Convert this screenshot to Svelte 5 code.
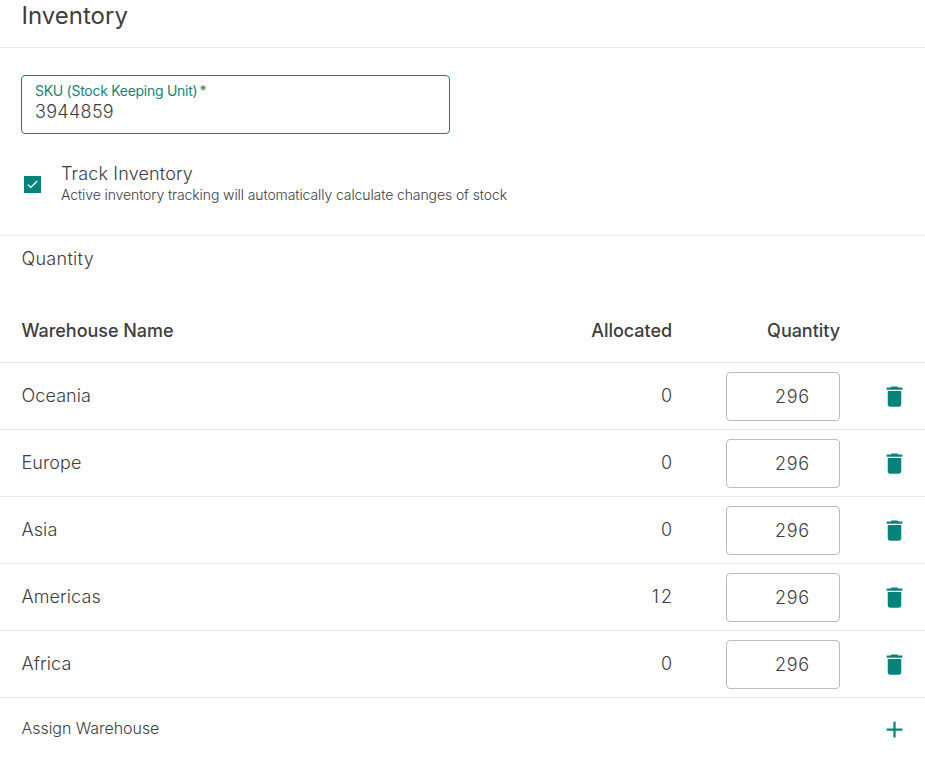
<script>
  let sku = $state('3944859');
  let tracked = $state(true);
  let stocks = $state([
    { name: 'Oceania', allocated: 0, quantity: '296' },
    { name: 'Europe', allocated: 0, quantity: '296' },
    { name: 'Asia', allocated: 0, quantity: '296' },
    { name: 'Americas', allocated: 12, quantity: '296' },
    { name: 'Africa', allocated: 0, quantity: '296' }
  ]);
  function remove(i) {
    stocks.splice(i, 1);
  }
</script>

<main class="card">
  <header><h1>Inventory</h1></header>

  <section class="details">
    <label class="field">
      <span class="caption">SKU (Stock Keeping Unit)&thinsp;*</span>
      <input class="sku" bind:value={sku} />
    </label>
    <div class="track">
      <button class="check" class:off={!tracked} aria-label="Track Inventory" onclick={() => (tracked = !tracked)}>
        {#if tracked}
          <svg width="11" height="9" viewBox="0 0 11 9"><path d="M.8 4.6 3.8 7.5 10.2 1" fill="none" stroke="#fff" stroke-width="1.2" /></svg>
        {/if}
      </button>
      <div>
        <div class="track-title">Track Inventory</div>
        <div class="track-note">Active inventory tracking will automatically calculate changes of stock</div>
      </div>
    </div>
  </section>

  <h2>Quantity</h2>

  <div class="row head">
    <span class="name">Warehouse Name</span>
    <span class="allocated">Allocated</span>
    <span class="qty">Quantity</span>
    <span class="action"></span>
  </div>
  {#each stocks as stock, i}
    <div class="row">
      <span class="name">{stock.name}</span>
      <span class="allocated count">{stock.allocated}</span>
      <span class="qty"><input bind:value={stock.quantity} aria-label="Quantity" /></span>
      <button class="action" aria-label="Delete" onclick={() => remove(i)}>
        <svg width="27" height="27" viewBox="0 0 24 24"><path fill="currentColor" d="M6 19c0 1.100.9 2 2 2h8c1.100 0 2-.9 2-2V7H6v12zM19 4h-3.500l-1-1h-5l-1 1H5v2h14V4z" /></svg>
      </button>
    </div>
  {/each}
  <div class="row assign">
    <span class="name">Assign Warehouse</span>
    <button class="action" aria-label="Assign warehouse">
      <svg width="27" height="27" viewBox="0 0 24 24"><path fill="currentColor" d="M19 13h-6v6h-2v-6H5v-2h6V5h2v6h6v2z" /></svg>
    </button>
  </div>
</main>

<style>
  :global(body) { background: #fff; overflow: hidden; }
  .card {
    width: 925px;
    height: 757px;
    overflow: hidden;
    background: #fff;
    color: #3d3d3d;
    font-family: Inter, "Liberation Sans", sans-serif;
    font-size: 18px;
  }
  header {
    height: 47px;
    padding-left: 21.5px;
    border-bottom: 1px solid #e6e6e6;
  }
  h1 { margin: 0; font-size: 24px; line-height: 31px; font-weight: 400; letter-spacing: 0; }
  .details {
    box-sizing: border-box;
    height: 188px;
    padding: 27px 21px 0;
    border-bottom: 1px solid #eaeaea;
  }
  .field {
    box-sizing: border-box;
    display: flex;
    flex-direction: column;
    width: 429px;
    height: 59px;
    padding: 6px 13px 0;
    border: 1px solid #148574;
    border-radius: 4px;
  }
  .caption { font-size: 14px; line-height: 18px; letter-spacing: -.28px; color: #148574; white-space: nowrap; }
  input { font: inherit; font-weight: 300; color: inherit; border: 0; outline: 0; background: none; padding: 0; }
  .sku { height: 24px; line-height: 24px; letter-spacing: .3px; }
  button { padding: 0; border: 0; background: none; color: #06847b; }
  .track { display: flex; align-items: flex-start; margin-top: 29px; }
  .check {
    display: flex;
    align-items: center;
    justify-content: center;
    width: 17px;
    height: 17px;
    margin: 13px 20px 0 3px;
    background: #06847b;
  }
  .off { background: #fff; outline: 1px solid #888; }
  .track-title { font-weight: 300; line-height: 22px; letter-spacing: .15px; }
  .track-note { font-size: 14px; font-weight: 300; line-height: 20px; letter-spacing: -.1px; white-space: nowrap; }
  h2 { margin: 0; padding: 11px 21.5px 0; height: 53px; font-size: 18px; line-height: 24px; font-weight: 300; letter-spacing: .3px; }
  .row {
    box-sizing: border-box;
    display: flex;
    align-items: center;
    height: 67px;
    padding: 0 17px 0 21.5px;
    border-bottom: 1px solid #e6e6e6;
    font-weight: 300;
    letter-spacing: .1px;
  }
  .head { height: 63px; font-weight: 500; letter-spacing: -.04px; }
  .name { flex: 1; padding-bottom: 2px; }
  .allocated { width: 120px; padding-bottom: 2px; text-align: right; }
  .count { width: 122px; margin-right: -2px; letter-spacing: 2px; }
  .qty { width: 114px; margin-left: 54px; text-align: right; }
  .head .qty { padding-bottom: 2px; }
  .qty input {
    box-sizing: border-box;
    display: block;
    width: 114px;
    height: 49px;
    padding: 0 29px 0 10px;
    border: 1px solid #bcbcbc;
    border-radius: 4px;
    text-align: right;
    letter-spacing: .8px;
  }
  .action { display: flex; justify-content: center; width: 27px; margin-left: 41px; padding-top: 1px; }
  .assign { height: 63px; border-bottom: 0; font-size: 16px; letter-spacing: -.05px; }
  .assign .name { padding-bottom: 4px; }
  .assign .action { padding-top: 0; }
</style>
